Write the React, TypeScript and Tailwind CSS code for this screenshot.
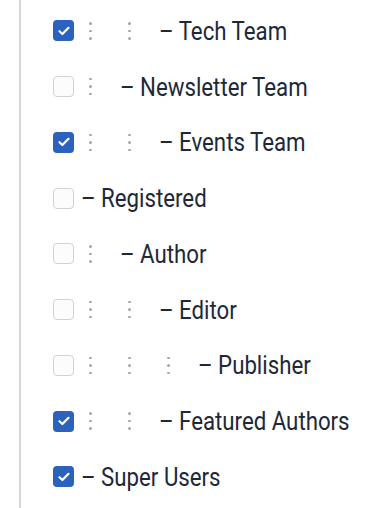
const groups = [
  { name: 'Tech Team', level: 2, checked: true },
  { name: 'Newsletter Team', level: 1, checked: false },
  { name: 'Events Team', level: 2, checked: true },
  { name: 'Registered', level: 0, checked: false },
  { name: 'Author', level: 1, checked: false },
  { name: 'Editor', level: 2, checked: false },
  { name: 'Publisher', level: 3, checked: false },
  { name: 'Featured Authors', level: 2, checked: true },
  { name: 'Super Users', level: 0, checked: true },
];

function Checkbox({ checked }: { checked: boolean }) {
  if (checked) {
    return (
      <span className="flex h-[21px] w-[21px] shrink-0 items-center justify-center rounded-[4px] bg-[#2a62bd]">
        <svg width="12" height="10" viewBox="0 0 12 10" fill="none">
          <path d="M1.5 5.2 4.4 8 10.5 1.8" stroke="white" strokeWidth="2.2" strokeLinecap="round" strokeLinejoin="round" />
        </svg>
      </span>
    );
  }
  return <span className="h-[21px] w-[21px] shrink-0 rounded-[4px] border border-[#cfd3d8] bg-[#fcfcfd]" />;
}

function Dots() {
  return (
    <span className="flex w-[39px] shrink-0 pl-[8px]">
      <span className="flex flex-col gap-[5px]">
        <span className="h-[2.5px] w-[2.5px] rounded-full bg-[#a3a6aa]" />
        <span className="h-[2.5px] w-[2.5px] rounded-full bg-[#a3a6aa]" />
        <span className="h-[2.5px] w-[2.5px] rounded-full bg-[#a3a6aa]" />
      </span>
    </span>
  );
}

export default function App() {
  return (
    <div className="h-[508px] w-[384px] bg-white pl-[19px] font-['Roboto',sans-serif]">
      <div className="h-full border-l-2 border-[#d6d8db] pl-[32px] pt-[3px]">
        {groups.map((g) => (
          <div key={g.name} className="flex h-[55.75px] items-center">
            <Checkbox checked={g.checked} />
            <span className="ml-[7px] flex items-center">
              {Array.from({ length: g.level }).map((_, i) => (
                <Dots key={i} />
              ))}
              <span className="origin-left scale-x-[0.855] whitespace-nowrap text-[26px] leading-none text-[#1d2839]">
                – {g.name}
              </span>
            </span>
          </div>
        ))}
      </div>
    </div>
  );
}
